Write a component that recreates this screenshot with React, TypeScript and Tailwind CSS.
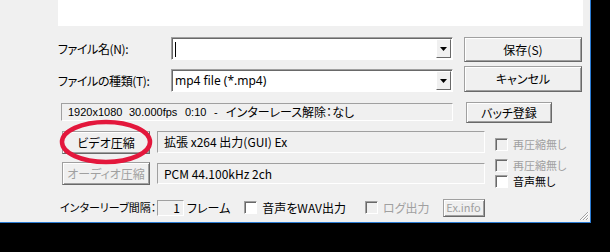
import * as React from "react";

const FONT = { fontFamily: '"Noto Sans CJK JP", "Noto Sans", sans-serif' };
const NARROW = { fontFamily: '"Liberation Sans", "Noto Sans CJK JP", sans-serif' };

function Btn({ w, h, label, disabled, className = "" }: { w: string; h: string; label: string; disabled?: boolean; className?: string }) {
  return (
    <div
      className={`${w} ${h} ${className} flex shrink-0 items-center justify-center whitespace-nowrap border border-t-[#a0a0a0] border-l-[#a0a0a0] border-b-[#696969] border-r-[#696969] bg-[#f0f0f0] shadow-[inset_1px_1px_0_#fff,inset_-1px_-1px_0_#a0a0a0] ${disabled ? "text-[#a0a0a0]" : "text-black"}`}
    >
      {label}
    </div>
  );
}

function Sunken({ w, h, children, className = "" }: { w: string; h: string; children?: React.ReactNode; className?: string }) {
  return (
    <div
      className={`${w} ${h} ${className} flex shrink-0 items-center whitespace-nowrap border border-t-[#a0a0a0] border-l-[#a0a0a0] border-b-white border-r-white bg-[#f0f0f0] pl-[6px] text-black`}
    >
      {children}
    </div>
  );
}

function Combo({ text, className = "" }: { text?: string; className?: string }) {
  return (
    <div className={`${className} flex h-[23px] w-[282px] shrink-0 items-center border border-t-[#a0a0a0] border-l-[#a0a0a0] border-b-white border-r-white bg-white shadow-[inset_1px_1px_0_#696969]`}>
      <span className="flex-1 pl-[3px] text-black" style={{ fontFamily: '"Noto Sans", sans-serif' }}>
        {text ?? <span className="inline-block h-[15px] w-px bg-black align-middle" />}
      </span>
      <div className="mr-[1px] flex h-[19px] w-[15px] items-center justify-center border border-t-[#fff] border-l-[#fff] border-b-[#696969] border-r-[#696969] bg-[#f0f0f0]">
        <svg width="7" height="4" viewBox="0 0 7 4">
          <path d="M0 0h7L3.5 4z" fill="#000" />
        </svg>
      </div>
    </div>
  );
}

function Check({ label, disabled, white, className = "" }: { label: string; disabled?: boolean; white?: boolean; className?: string }) {
  return (
    <div className={`${className} flex h-[13px] items-center gap-[5px] whitespace-nowrap ${disabled ? "text-[#a0a0a0]" : "text-black"}`}>
      <span className={`block h-[13px] w-[13px] shrink-0 border border-t-[#a0a0a0] border-l-[#a0a0a0] border-b-white border-r-white shadow-[inset_1px_1px_0_#696969] ${white ? "bg-white" : "bg-[#f0f0f0]"}`} />
      <span className="leading-[13px]">{label}</span>
    </div>
  );
}

export default function App() {
  return (
    <div className="relative h-[252px] w-[610px] overflow-hidden bg-black text-[12px] [font-feature-settings:'palt']" style={FONT}>
      <div className="relative flex h-[223px] w-[591px] flex-col border-r border-b border-[#2b7bd3] bg-[#f0f0f0]">
        <div className="ml-[58px] h-[26px] w-[525px] shrink-0 bg-white" />

        {/* file name */}
        <div className="mt-[11px] flex h-[25px] items-start">
          <span className="ml-[58px] w-[113px] pt-[3px] tracking-[-0.4px] text-black">ファイル名(N):</span>
          <Combo />
          <Btn w="w-[118px]" h="h-[25px]" label="保存(S)" className="ml-[11px]" />
        </div>

        {/* file type */}
        <div className="mt-[4px] flex h-[26px] items-start">
          <span className="ml-[58px] w-[113px] pt-[6px] tracking-[-0.4px] text-black">ファイルの種類(T):</span>
          <Combo text="mp4 file (*.mp4)" className="mt-[3px]" />
          <Btn w="w-[118px]" h="h-[26px]" label="キャンセル" className="ml-[11px]" />
        </div>

        {/* status */}
        <div className="mt-[10px] flex h-[21px] items-start">
          <Sunken w="w-[392px]" h="h-[18px]" className="ml-[61px] mt-[1px]">
            <span className="flex items-center text-[11px]" style={NARROW}>
              <span className="w-[61px]">1920x1080</span>
              <span className="w-[56px]">30.000fps</span>
              <span className="w-[29px]">0:10</span>
              <span className="w-[12px]">-</span>
              <span className="text-[12px]" style={FONT}>インターレース解除：なし</span>
            </span>
          </Sunken>
          <Btn w="w-[86px]" h="h-[21px]" label="バッチ登録" className="ml-[13px]" />
        </div>

        {/* video */}
        <div className="mt-[8px] flex h-[23px] items-start">
          <Btn w="w-[88px]" h="h-[23px]" label="ビデオ圧縮" className="ml-[62px]" />
          <Sunken w="w-[328px]" h="h-[22px]" className="ml-[7px]">拡張 x264 出力(GUI) Ex</Sunken>
          <Check label="再圧縮無し" disabled className="ml-[10px] mt-[7px] text-[11px]" />
        </div>

        {/* audio */}
        <div className="mt-[8px] flex h-[26px] items-start">
          <Btn w="w-[88px]" h="h-[23px]" label="オーディオ圧縮" disabled className="ml-[62px]" />
          <Sunken w="w-[328px]" h="h-[21px]" className="ml-[7px] mt-[1px]">PCM 44.100kHz 2ch</Sunken>
          <div className="ml-[10px] -mt-[3px] flex flex-col gap-[3px] text-[11px]">
            <Check label="再圧縮無し" disabled />
            <Check label="音声無し" white />
          </div>
        </div>

        {/* interleave */}
        <div className="mt-[11px] flex h-[17px] items-center whitespace-nowrap text-black">
          <span className="ml-[60px] w-[97px] text-[11px]">インターリーブ間隔：</span>
          <div className="flex h-[16px] w-[27px] items-center justify-end border border-t-[#a0a0a0] border-l-[#a0a0a0] border-b-white border-r-white bg-[#f0f0f0] pr-[3px]">
            1
          </div>
          <span className="ml-[3px]">フレーム</span>
          <Check label="音声をWAV出力" white className="ml-[14px]" />
          <Check label="ログ出力" disabled className="ml-[19px]" />
          <Btn w="w-[42px]" h="h-[18px]" label="Ex.info" disabled className="ml-[13px] text-[11px]" />
        </div>

        {/* resize grip */}
        <svg className="absolute right-[1px] bottom-[1px]" width="10" height="10" viewBox="0 0 10 10">
          <path d="M9 1L1 9M9 4L4 9M9 7L7 9" stroke="#a0a0a0" strokeWidth="1" />
          <path d="M10 1L2 9M10 4L5 9M10 7L8 9" stroke="#fff" strokeWidth="1" />
        </svg>
      </div>

      {/* red marker ellipse */}
      <svg className="pointer-events-none absolute left-0 top-0" width="610" height="252">
        <ellipse cx="106" cy="142" rx="44" ry="20" fill="none" stroke="#e3173c" strokeWidth="4.5" />
      </svg>
    </div>
  );
}
